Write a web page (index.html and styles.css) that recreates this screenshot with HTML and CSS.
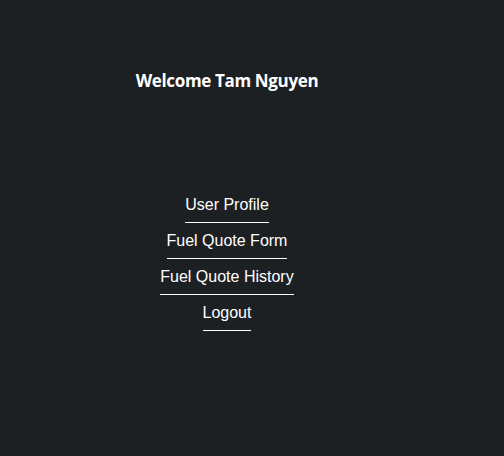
FILE: index.html
```html
<!DOCTYPE html>
<html>
<head>
<meta charset="utf-8">
<link rel="stylesheet" href="styles.css">
</head>
<body>
<div class="page">
  <h1 class="title">Welcome Tam Nguyen</h1>
  <nav class="menu">
    <a class="menu-link" href="#">User Profile</a>
    <a class="menu-link" href="#">Fuel Quote Form</a>
    <a class="menu-link" href="#">Fuel Quote History</a>
    <a class="menu-link" href="#">Logout</a>
  </nav>
</div>
</body>
</html>
```
FILE: styles.css
```css
html, body {
  margin: 0;
  padding: 0;
  background: #1d2022;
  height: 100%;
}
.page {
  width: 454px;
  display: flex;
  flex-direction: column;
  align-items: center;
  color: #ffffff;
}
.title {
  margin: 69px 0 0 0;
  font-family: "Open Sans", sans-serif;
  font-size: 17px;
  font-weight: 700;
  line-height: 24px;
  letter-spacing: -0.35px;
}
.menu {
  margin-top: 102px;
  display: flex;
  flex-direction: column;
  align-items: center;
}
.menu-link {
  display: block;
  color: #ffffff;
  text-decoration: none;
  font-family: "Liberation Sans", Arial, sans-serif;
  font-size: 16px;
  line-height: 18px;
  padding-top: 1px;
  padding-bottom: 8px;
  border-bottom: 1px solid #ffffff;
  margin-bottom: 8px;
}
```
